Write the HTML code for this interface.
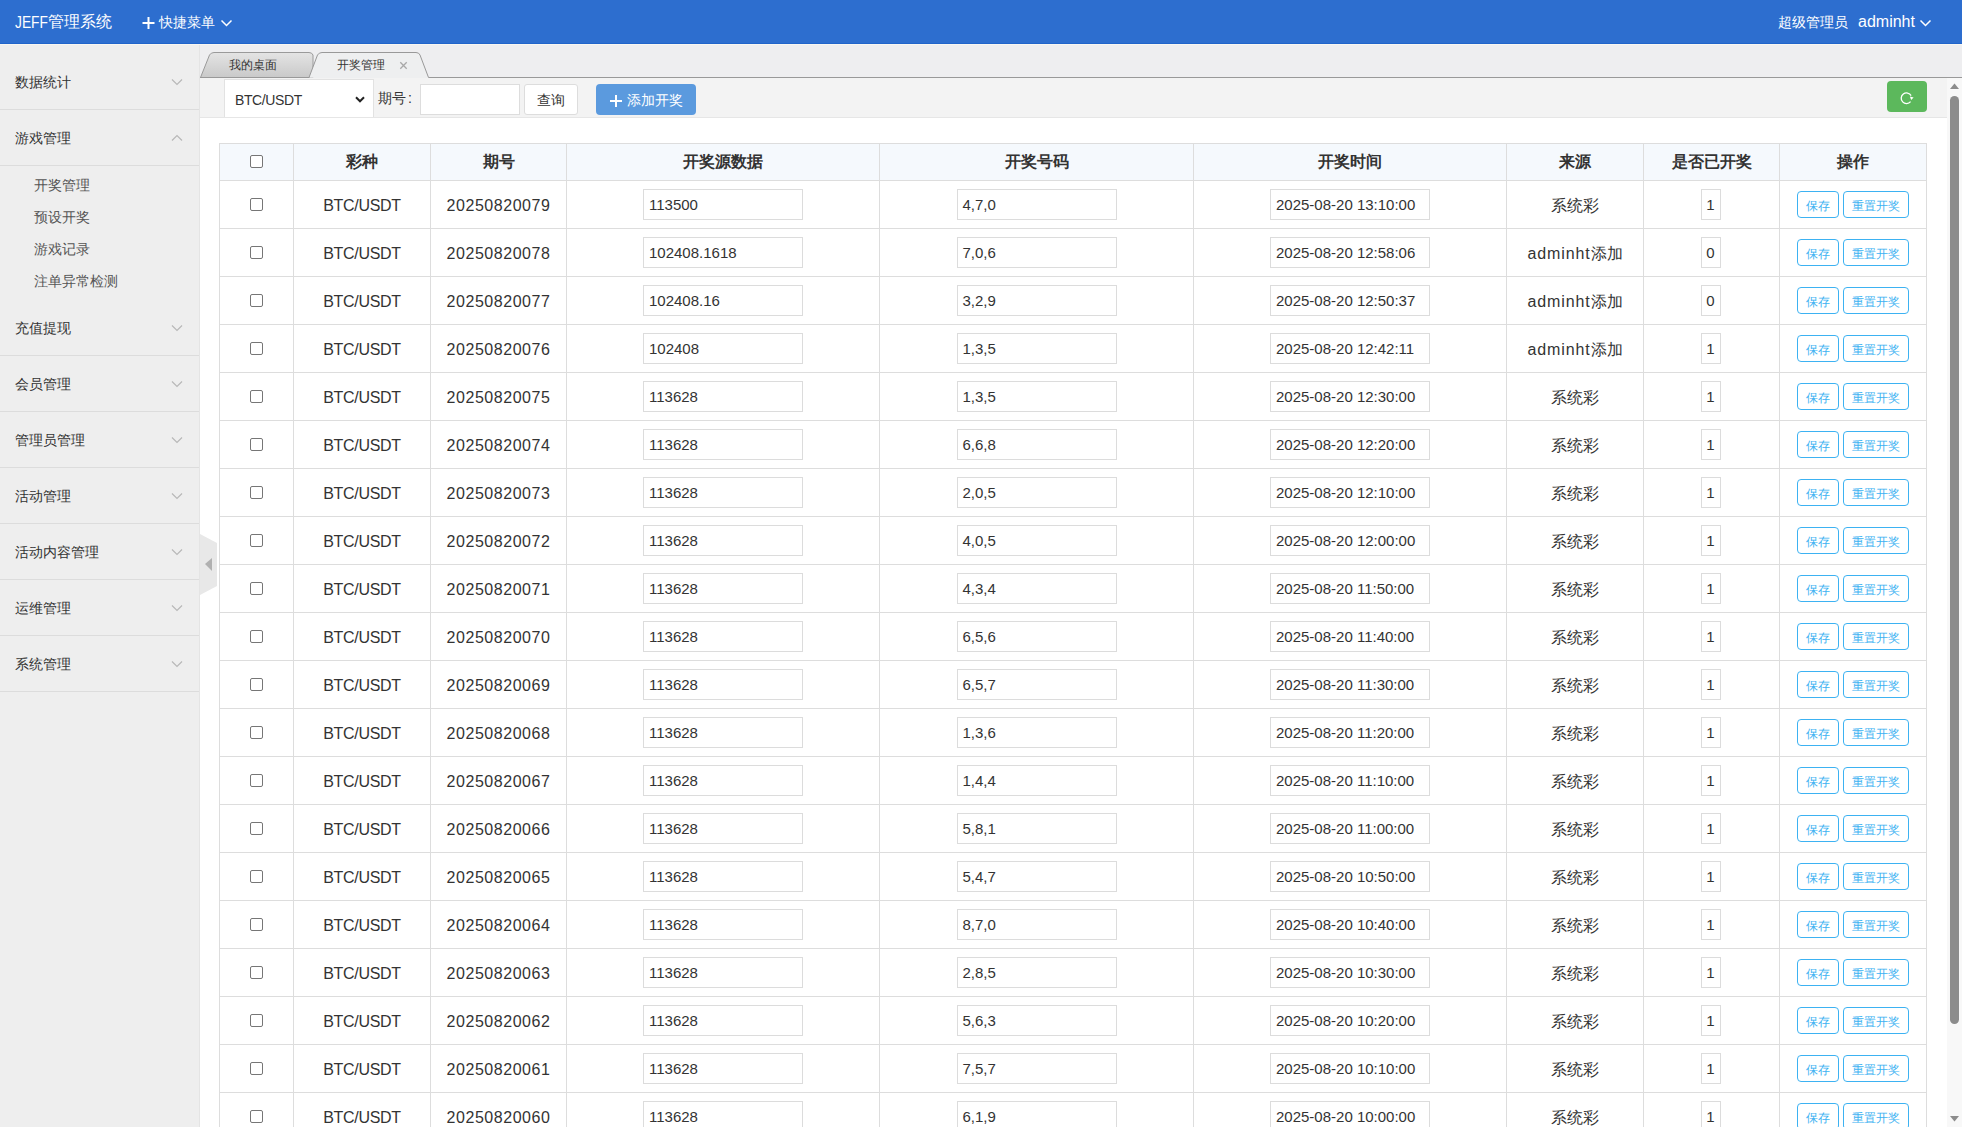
<!DOCTYPE html>
<html><head><meta charset="utf-8"><title>JEFF管理系统</title>
<style>
*{box-sizing:border-box;}
html,body{margin:0;padding:0;}
body{width:1962px;height:1127px;overflow:hidden;position:relative;background:#fff;font-family:"Liberation Sans",sans-serif;color:#333;}
.abs{position:absolute;}
#hdr{position:absolute;left:0;top:0;width:1962px;height:44px;background:#2d6ecf;color:#fff;}
#hdr .t{position:absolute;left:15px;top:12px;font-size:16px;line-height:20px;white-space:nowrap;}
#hdr .q{position:absolute;left:159px;top:13px;font-size:14px;line-height:18px;white-space:nowrap;}
#hdr .r1{position:absolute;left:1778px;top:13px;font-size:14px;line-height:18px;white-space:nowrap;}
#hdr .r2{position:absolute;left:1858px;top:12px;font-size:16px;line-height:20px;white-space:nowrap;}
#side{position:absolute;left:0;top:44px;width:200px;height:1083px;background:#eeeeee;border-right:1px solid #e4e4e4;}
#side .mi{position:absolute;left:15px;font-size:14px;line-height:20px;color:#333;white-space:nowrap;}
#side .si{position:absolute;left:34px;font-size:14px;line-height:20px;color:#555;white-space:nowrap;}
#side .mchev{position:absolute;left:171px;width:12px;height:8px;}
#side .sb{position:absolute;left:0;width:199px;height:1px;background:#dcdcdc;}
#side > div{margin-top:-44px;}
.chev{display:block;}
#handle{position:absolute;left:200px;top:534px;width:18px;height:61px;}
#tabbar{position:absolute;left:200px;top:44px;width:1762px;height:34px;background:#eeeef0;}
#tool{position:absolute;left:200px;top:78px;width:1747px;height:40px;background:#f3f3f3;border-bottom:1px solid #e6e6e6;}
#sel{position:absolute;left:224px;top:79px;width:150px;height:38px;background:#fff;border:1px solid #e2e2e2;border-bottom:none;font-size:14px;line-height:20px;}
#sel .v{position:absolute;left:10px;top:10px;}
#qh{position:absolute;left:378px;top:88px;font-size:14px;line-height:20px;}
#qinp{position:absolute;left:420px;top:84px;width:100px;height:31px;background:#fff;border:1px solid #ddd;}
#qbtn{position:absolute;left:524px;top:84px;width:54px;height:31px;background:#fff;border:1px solid #ddd;border-radius:3px;font-size:14px;line-height:31px;text-align:center;}
#addbtn{position:absolute;left:596px;top:84px;width:100px;height:31px;background:#5b9ade;border-radius:4px;color:#fff;font-size:14px;line-height:31px;text-align:center;white-space:nowrap;}
#refresh{position:absolute;left:1887px;top:81px;width:40px;height:31px;background:#5cb85c;border-radius:4px;}
#sbar{position:absolute;left:1947px;top:78px;width:15px;height:1049px;background:#f8f8f8;}
#thumb{position:absolute;left:1950px;top:96px;width:9px;height:928px;background:#8c8c8c;border-radius:5px;}
table{position:absolute;left:219px;top:143px;width:1707px;border-collapse:collapse;table-layout:fixed;}
td,th{border:1px solid #dddddd;text-align:center;padding:0;}
th{height:37px;background:#f5f9fd;font-size:16px;font-weight:bold;color:#333;}
td{height:48px;font-size:16px;color:#333;}
.cb{display:inline-block;width:13px;height:13px;border:1px solid #767676;border-radius:2px;background:#fff;vertical-align:middle;position:relative;top:-1px;}
.inp{display:inline-block;height:31px;border:1px solid #dcdcdc;background:#fff;font-size:15px;line-height:29px;text-align:left;padding-left:5px;vertical-align:middle;white-space:nowrap;overflow:hidden;}
.w160{width:160px;}
.num{letter-spacing:0.55px;}
.tx{position:relative;top:1px;}
.w20{width:20px;padding-left:0;text-align:center;position:relative;left:-1px;}
.btn{display:inline-block;height:27px;border:1px solid #3db2f2;border-radius:4px;color:#3db2f2;font-size:12px;line-height:28px;vertical-align:middle;}
.b1{width:42px;}
.b2{width:66px;margin-left:4px;}
</style></head><body>
<div id="hdr">
 <div class="t"><span style="display:inline-block;width:33px;transform:scaleX(0.86);transform-origin:0 50%;position:relative;top:1px;">JEFF</span>管理系统</div>
 <svg class="abs" style="left:142px;top:17px" width="13" height="12" viewBox="0 0 13 12"><rect x="0.5" y="5" width="12" height="2" fill="#fff"/><rect x="5.5" y="0" width="2" height="12" fill="#fff"/></svg><div class="q">快捷菜单</div>
 <svg class="abs" style="left:220px;top:19px" width="13" height="8" viewBox="0 0 13 8"><path d="M1.5 1.5 L6.5 6.5 L11.5 1.5" fill="none" stroke="#fff" stroke-width="1.5"/></svg>
 <div class="r1">超级管理员</div>
 <div class="r2">adminht</div>
 <svg class="abs" style="left:1919px;top:19px" width="13" height="8" viewBox="0 0 13 8"><path d="M1.5 1.5 L6.5 6.5 L11.5 1.5" fill="none" stroke="#fff" stroke-width="1.5"/></svg>
</div>
<div id="side">
<div class="mi" style="top:72px">数据统计</div><div class="mchev" style="top:78px"><svg class="chev" width="12" height="8" viewBox="0 0 12 8"><path d="M1 1.5 L6 6.5 L11 1.5" fill="none" stroke="#b8b8b8" stroke-width="1.2"/></svg></div><div class="sb" style="top:109px"></div><div class="mi" style="top:128px">游戏管理</div><div class="mchev" style="top:134px"><svg class="chev" width="12" height="8" viewBox="0 0 12 8"><path d="M1 6.5 L6 1.5 L11 6.5" fill="none" stroke="#b8b8b8" stroke-width="1.2"/></svg></div><div class="sb" style="top:165px"></div><div class="mi" style="top:318px">充值提现</div><div class="mchev" style="top:324px"><svg class="chev" width="12" height="8" viewBox="0 0 12 8"><path d="M1 1.5 L6 6.5 L11 1.5" fill="none" stroke="#b8b8b8" stroke-width="1.2"/></svg></div><div class="sb" style="top:355px"></div><div class="mi" style="top:374px">会员管理</div><div class="mchev" style="top:380px"><svg class="chev" width="12" height="8" viewBox="0 0 12 8"><path d="M1 1.5 L6 6.5 L11 1.5" fill="none" stroke="#b8b8b8" stroke-width="1.2"/></svg></div><div class="sb" style="top:411px"></div><div class="mi" style="top:430px">管理员管理</div><div class="mchev" style="top:436px"><svg class="chev" width="12" height="8" viewBox="0 0 12 8"><path d="M1 1.5 L6 6.5 L11 1.5" fill="none" stroke="#b8b8b8" stroke-width="1.2"/></svg></div><div class="sb" style="top:467px"></div><div class="mi" style="top:486px">活动管理</div><div class="mchev" style="top:492px"><svg class="chev" width="12" height="8" viewBox="0 0 12 8"><path d="M1 1.5 L6 6.5 L11 1.5" fill="none" stroke="#b8b8b8" stroke-width="1.2"/></svg></div><div class="sb" style="top:523px"></div><div class="mi" style="top:542px">活动内容管理</div><div class="mchev" style="top:548px"><svg class="chev" width="12" height="8" viewBox="0 0 12 8"><path d="M1 1.5 L6 6.5 L11 1.5" fill="none" stroke="#b8b8b8" stroke-width="1.2"/></svg></div><div class="sb" style="top:579px"></div><div class="mi" style="top:598px">运维管理</div><div class="mchev" style="top:604px"><svg class="chev" width="12" height="8" viewBox="0 0 12 8"><path d="M1 1.5 L6 6.5 L11 1.5" fill="none" stroke="#b8b8b8" stroke-width="1.2"/></svg></div><div class="sb" style="top:635px"></div><div class="mi" style="top:654px">系统管理</div><div class="mchev" style="top:660px"><svg class="chev" width="12" height="8" viewBox="0 0 12 8"><path d="M1 1.5 L6 6.5 L11 1.5" fill="none" stroke="#b8b8b8" stroke-width="1.2"/></svg></div><div class="sb" style="top:691px"></div><div class="si" style="top:175px">开奖管理</div><div class="si" style="top:207px">预设开奖</div><div class="si" style="top:239px">游戏记录</div><div class="si" style="top:271px">注单异常检测</div>
</div>
<svg id="handle" width="18" height="61" viewBox="0 0 18 61"><path d="M0 0 L17 9 L17 52 L0 61 Z" fill="#e8e8e8"/><path d="M5 30 L12 24 L12 37 Z" fill="#b0b0b0"/></svg>
<div id="tabbar"></div>
<svg class="abs" style="left:200px;top:44px" width="1762" height="35" viewBox="0 0 1762 35">
 <defs><linearGradient id="g1" x1="0" y1="0" x2="0" y2="1"><stop offset="0" stop-color="#e4e4e4"/><stop offset="1" stop-color="#c9c9c9"/></linearGradient></defs>
 <path d="M0.5 33.5 L9.5 11 Q11 8.5 14 8.5 L109 8.5 Q112 8.5 113 11 L113 33.5 Z" fill="url(#g1)" stroke="#9a9a9a" stroke-width="1"/>
 <path d="M0 33.5 L109 33.5 L117.5 11 Q119 8.5 122 8.5 L216 8.5 Q219 8.5 220 11 L228.5 33.5 L1762 33.5" fill="#eeeff0" stroke="#999" stroke-width="1"/>
 <path d="M110 34 L228 34" stroke="#eeeff0" stroke-width="1"/>
</svg>
<div class="abs" style="left:229px;top:58px;font-size:12px;line-height:15px;color:#333;">我的桌面</div>
<div class="abs" style="left:337px;top:58px;font-size:12px;line-height:15px;color:#333;">开奖管理</div>
<svg class="abs" style="left:399px;top:61px" width="9" height="9" viewBox="0 0 9 9"><path d="M1.3 1.3 L7.7 7.7 M7.7 1.3 L1.3 7.7" stroke="#a8a8a8" stroke-width="1.3"/></svg>
<div id="tool"></div>
<div id="sel"><span class="v" style="letter-spacing:-0.4px">BTC/USDT</span><svg class="abs" style="left:130px;top:16px" width="11" height="8" viewBox="0 0 11 8"><path d="M1 1.3 L5 5.3 L9 1.3" fill="none" stroke="#222" stroke-width="2"/></svg></div>
<div id="qh">期<span style="letter-spacing:2px">号</span>:</div>
<div id="qinp"></div>
<div id="qbtn">查询</div>
<div id="addbtn"><svg class="abs" style="left:14px;top:11px" width="12" height="12" viewBox="0 0 12 12"><rect x="0" y="5" width="12" height="2" fill="#fff"/><rect x="5" y="0" width="2" height="12" fill="#fff"/></svg><span class="abs" style="left:31px;top:1px">添加开奖</span></div>
<div id="refresh"><svg class="abs" style="left:0;top:0" width="40" height="31" viewBox="0 0 40 31"><path d="M23.6 20.6 A5.3 5.3 0 1 1 24.1 14.6" fill="none" stroke="#fff" stroke-width="1.3"/><path d="M22.9 15.6 L26.6 16.6 L24.2 19.1 Z" fill="#fff"/></svg></div>
<table>
<colgroup><col style="width:74px"><col style="width:137px"><col style="width:136px"><col style="width:313px"><col style="width:314px"><col style="width:313px"><col style="width:137px"><col style="width:136px"><col style="width:147px"></colgroup>
<tr><th><span class="cb"></span></th><th>彩种</th><th>期号</th><th>开奖源数据</th><th>开奖号码</th><th>开奖时间</th><th>来源</th><th>是否已开奖</th><th>操作</th></tr>
<tr><td><span class="cb"></span></td><td><span class="tx" style="letter-spacing:-0.3px">BTC/USDT</span></td><td><span class="tx num">20250820079</span></td><td><span class="inp w160">113500</span></td><td><span class="inp w160">4,7,0</span></td><td><span class="inp w160">2025-08-20 13:10:00</span></td><td><span class="tx" style="top:2px">系统彩</span></td><td><span class="inp w20">1</span></td><td><span class="btn b1">保存</span><span class="btn b2">重置开奖</span></td></tr><tr><td><span class="cb"></span></td><td><span class="tx" style="letter-spacing:-0.3px">BTC/USDT</span></td><td><span class="tx num">20250820078</span></td><td><span class="inp w160">102408.1618</span></td><td><span class="inp w160">7,0,6</span></td><td><span class="inp w160">2025-08-20 12:58:06</span></td><td><span class="tx" style="top:2px"><span style="letter-spacing:0.9px">adminht</span>添加</span></td><td><span class="inp w20">0</span></td><td><span class="btn b1">保存</span><span class="btn b2">重置开奖</span></td></tr><tr><td><span class="cb"></span></td><td><span class="tx" style="letter-spacing:-0.3px">BTC/USDT</span></td><td><span class="tx num">20250820077</span></td><td><span class="inp w160">102408.16</span></td><td><span class="inp w160">3,2,9</span></td><td><span class="inp w160">2025-08-20 12:50:37</span></td><td><span class="tx" style="top:2px"><span style="letter-spacing:0.9px">adminht</span>添加</span></td><td><span class="inp w20">0</span></td><td><span class="btn b1">保存</span><span class="btn b2">重置开奖</span></td></tr><tr><td><span class="cb"></span></td><td><span class="tx" style="letter-spacing:-0.3px">BTC/USDT</span></td><td><span class="tx num">20250820076</span></td><td><span class="inp w160">102408</span></td><td><span class="inp w160">1,3,5</span></td><td><span class="inp w160">2025-08-20 12:42:11</span></td><td><span class="tx" style="top:2px"><span style="letter-spacing:0.9px">adminht</span>添加</span></td><td><span class="inp w20">1</span></td><td><span class="btn b1">保存</span><span class="btn b2">重置开奖</span></td></tr><tr><td><span class="cb"></span></td><td><span class="tx" style="letter-spacing:-0.3px">BTC/USDT</span></td><td><span class="tx num">20250820075</span></td><td><span class="inp w160">113628</span></td><td><span class="inp w160">1,3,5</span></td><td><span class="inp w160">2025-08-20 12:30:00</span></td><td><span class="tx" style="top:2px">系统彩</span></td><td><span class="inp w20">1</span></td><td><span class="btn b1">保存</span><span class="btn b2">重置开奖</span></td></tr><tr><td><span class="cb"></span></td><td><span class="tx" style="letter-spacing:-0.3px">BTC/USDT</span></td><td><span class="tx num">20250820074</span></td><td><span class="inp w160">113628</span></td><td><span class="inp w160">6,6,8</span></td><td><span class="inp w160">2025-08-20 12:20:00</span></td><td><span class="tx" style="top:2px">系统彩</span></td><td><span class="inp w20">1</span></td><td><span class="btn b1">保存</span><span class="btn b2">重置开奖</span></td></tr><tr><td><span class="cb"></span></td><td><span class="tx" style="letter-spacing:-0.3px">BTC/USDT</span></td><td><span class="tx num">20250820073</span></td><td><span class="inp w160">113628</span></td><td><span class="inp w160">2,0,5</span></td><td><span class="inp w160">2025-08-20 12:10:00</span></td><td><span class="tx" style="top:2px">系统彩</span></td><td><span class="inp w20">1</span></td><td><span class="btn b1">保存</span><span class="btn b2">重置开奖</span></td></tr><tr><td><span class="cb"></span></td><td><span class="tx" style="letter-spacing:-0.3px">BTC/USDT</span></td><td><span class="tx num">20250820072</span></td><td><span class="inp w160">113628</span></td><td><span class="inp w160">4,0,5</span></td><td><span class="inp w160">2025-08-20 12:00:00</span></td><td><span class="tx" style="top:2px">系统彩</span></td><td><span class="inp w20">1</span></td><td><span class="btn b1">保存</span><span class="btn b2">重置开奖</span></td></tr><tr><td><span class="cb"></span></td><td><span class="tx" style="letter-spacing:-0.3px">BTC/USDT</span></td><td><span class="tx num">20250820071</span></td><td><span class="inp w160">113628</span></td><td><span class="inp w160">4,3,4</span></td><td><span class="inp w160">2025-08-20 11:50:00</span></td><td><span class="tx" style="top:2px">系统彩</span></td><td><span class="inp w20">1</span></td><td><span class="btn b1">保存</span><span class="btn b2">重置开奖</span></td></tr><tr><td><span class="cb"></span></td><td><span class="tx" style="letter-spacing:-0.3px">BTC/USDT</span></td><td><span class="tx num">20250820070</span></td><td><span class="inp w160">113628</span></td><td><span class="inp w160">6,5,6</span></td><td><span class="inp w160">2025-08-20 11:40:00</span></td><td><span class="tx" style="top:2px">系统彩</span></td><td><span class="inp w20">1</span></td><td><span class="btn b1">保存</span><span class="btn b2">重置开奖</span></td></tr><tr><td><span class="cb"></span></td><td><span class="tx" style="letter-spacing:-0.3px">BTC/USDT</span></td><td><span class="tx num">20250820069</span></td><td><span class="inp w160">113628</span></td><td><span class="inp w160">6,5,7</span></td><td><span class="inp w160">2025-08-20 11:30:00</span></td><td><span class="tx" style="top:2px">系统彩</span></td><td><span class="inp w20">1</span></td><td><span class="btn b1">保存</span><span class="btn b2">重置开奖</span></td></tr><tr><td><span class="cb"></span></td><td><span class="tx" style="letter-spacing:-0.3px">BTC/USDT</span></td><td><span class="tx num">20250820068</span></td><td><span class="inp w160">113628</span></td><td><span class="inp w160">1,3,6</span></td><td><span class="inp w160">2025-08-20 11:20:00</span></td><td><span class="tx" style="top:2px">系统彩</span></td><td><span class="inp w20">1</span></td><td><span class="btn b1">保存</span><span class="btn b2">重置开奖</span></td></tr><tr><td><span class="cb"></span></td><td><span class="tx" style="letter-spacing:-0.3px">BTC/USDT</span></td><td><span class="tx num">20250820067</span></td><td><span class="inp w160">113628</span></td><td><span class="inp w160">1,4,4</span></td><td><span class="inp w160">2025-08-20 11:10:00</span></td><td><span class="tx" style="top:2px">系统彩</span></td><td><span class="inp w20">1</span></td><td><span class="btn b1">保存</span><span class="btn b2">重置开奖</span></td></tr><tr><td><span class="cb"></span></td><td><span class="tx" style="letter-spacing:-0.3px">BTC/USDT</span></td><td><span class="tx num">20250820066</span></td><td><span class="inp w160">113628</span></td><td><span class="inp w160">5,8,1</span></td><td><span class="inp w160">2025-08-20 11:00:00</span></td><td><span class="tx" style="top:2px">系统彩</span></td><td><span class="inp w20">1</span></td><td><span class="btn b1">保存</span><span class="btn b2">重置开奖</span></td></tr><tr><td><span class="cb"></span></td><td><span class="tx" style="letter-spacing:-0.3px">BTC/USDT</span></td><td><span class="tx num">20250820065</span></td><td><span class="inp w160">113628</span></td><td><span class="inp w160">5,4,7</span></td><td><span class="inp w160">2025-08-20 10:50:00</span></td><td><span class="tx" style="top:2px">系统彩</span></td><td><span class="inp w20">1</span></td><td><span class="btn b1">保存</span><span class="btn b2">重置开奖</span></td></tr><tr><td><span class="cb"></span></td><td><span class="tx" style="letter-spacing:-0.3px">BTC/USDT</span></td><td><span class="tx num">20250820064</span></td><td><span class="inp w160">113628</span></td><td><span class="inp w160">8,7,0</span></td><td><span class="inp w160">2025-08-20 10:40:00</span></td><td><span class="tx" style="top:2px">系统彩</span></td><td><span class="inp w20">1</span></td><td><span class="btn b1">保存</span><span class="btn b2">重置开奖</span></td></tr><tr><td><span class="cb"></span></td><td><span class="tx" style="letter-spacing:-0.3px">BTC/USDT</span></td><td><span class="tx num">20250820063</span></td><td><span class="inp w160">113628</span></td><td><span class="inp w160">2,8,5</span></td><td><span class="inp w160">2025-08-20 10:30:00</span></td><td><span class="tx" style="top:2px">系统彩</span></td><td><span class="inp w20">1</span></td><td><span class="btn b1">保存</span><span class="btn b2">重置开奖</span></td></tr><tr><td><span class="cb"></span></td><td><span class="tx" style="letter-spacing:-0.3px">BTC/USDT</span></td><td><span class="tx num">20250820062</span></td><td><span class="inp w160">113628</span></td><td><span class="inp w160">5,6,3</span></td><td><span class="inp w160">2025-08-20 10:20:00</span></td><td><span class="tx" style="top:2px">系统彩</span></td><td><span class="inp w20">1</span></td><td><span class="btn b1">保存</span><span class="btn b2">重置开奖</span></td></tr><tr><td><span class="cb"></span></td><td><span class="tx" style="letter-spacing:-0.3px">BTC/USDT</span></td><td><span class="tx num">20250820061</span></td><td><span class="inp w160">113628</span></td><td><span class="inp w160">7,5,7</span></td><td><span class="inp w160">2025-08-20 10:10:00</span></td><td><span class="tx" style="top:2px">系统彩</span></td><td><span class="inp w20">1</span></td><td><span class="btn b1">保存</span><span class="btn b2">重置开奖</span></td></tr><tr><td><span class="cb"></span></td><td><span class="tx" style="letter-spacing:-0.3px">BTC/USDT</span></td><td><span class="tx num">20250820060</span></td><td><span class="inp w160">113628</span></td><td><span class="inp w160">6,1,9</span></td><td><span class="inp w160">2025-08-20 10:00:00</span></td><td><span class="tx" style="top:2px">系统彩</span></td><td><span class="inp w20">1</span></td><td><span class="btn b1">保存</span><span class="btn b2">重置开奖</span></td></tr>
</table>
<div id="sbar"></div>
<div class="abs" style="left:0;top:43px;width:1962px;height:1px;background:#2064ca"></div>
<div class="abs" style="left:0;top:44px;width:1962px;height:1px;background:#f8f6f1"></div>
<svg class="abs" style="left:1947px;top:80px" width="15" height="12" viewBox="0 0 15 12"><path d="M3 9 L7.5 3.5 L12 9 Z" fill="#8c8c8c"/></svg>
<div id="thumb"></div>
<svg class="abs" style="left:1947px;top:1113px" width="15" height="12" viewBox="0 0 15 12"><path d="M3 3 L7.5 8.5 L12 3 Z" fill="#8c8c8c"/></svg>
</body></html>
